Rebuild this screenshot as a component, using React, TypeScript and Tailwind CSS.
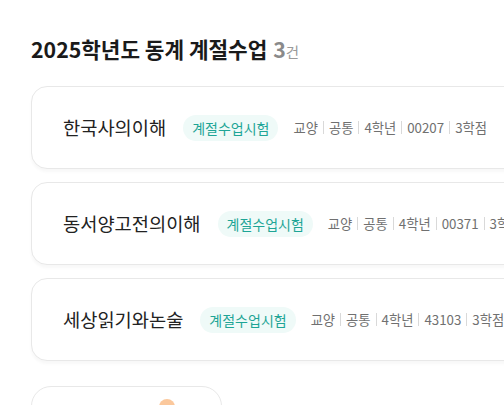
const courses = [
  { name: "한국사의이해", code: "00207" },
  { name: "동서양고전의이해", code: "00371" },
  { name: "세상읽기와논술", code: "43103" },
];

function Meta({ code }: { code: string }) {
  const items = ["교양", "공통", "4학년", code, "3학점"];
  return (
    <div className="flex items-center text-[13.3px] text-[#707070] whitespace-nowrap">
      {items.map((t, i) => (
        <div key={i} className="flex items-center">
          {i > 0 && <span className="mx-[5px] h-[13px] w-px bg-[#d9d9d9]" />}
          <span>{t}</span>
        </div>
      ))}
    </div>
  );
}

function CourseCard({ name, code }: { name: string; code: string }) {
  return (
    <div className="flex h-[83px] w-[640px] items-center rounded-[16px] border border-[#e8e8e8] bg-white pl-[31px] shadow-[0_3px_3px_rgba(0,0,0,0.03)]">
      <span className="text-[18.7px] text-[#222] whitespace-nowrap">{name}</span>
      <span className="ml-[17px] rounded-full bg-[#effaf8] px-[9px] py-[3px] text-[14px] leading-[20px] text-[#1ea596] whitespace-nowrap">
        계절수업시험
      </span>
      <div className="ml-[15px]">
        <Meta code={code} />
      </div>
    </div>
  );
}

export default function App() {
  return (
    <div
      className="h-[405px] w-[504px] overflow-hidden bg-white px-[31px] pt-[34px]"
      style={{ fontFamily: '"Noto Sans CJK KR", "Noto Sans", sans-serif' }}
    >
      <h1 className="flex items-baseline text-[21.3px] leading-[30px] font-bold text-[#1a1a1a] whitespace-nowrap">
        2025학년도 동계 계절수업
        <span className="ml-[6px] text-[#8a8a8a]">3</span>
        <span className="text-[14.5px] font-normal text-[#9a9a9a]">건</span>
      </h1>
      <div className="mt-[19px] flex flex-col gap-[13px]">
        {courses.map((c) => (
          <CourseCard key={c.code} name={c.name} code={c.code} />
        ))}
      </div>
      <div className="mt-[25px] flex h-[80px] w-[191px] justify-center rounded-[20px] border border-[#e8e8e8] bg-white pt-[12px]">
        <div className="ml-[80px] h-[16px] w-[16px] rounded-full bg-[#fbc89c]" />
      </div>
    </div>
  );
}
